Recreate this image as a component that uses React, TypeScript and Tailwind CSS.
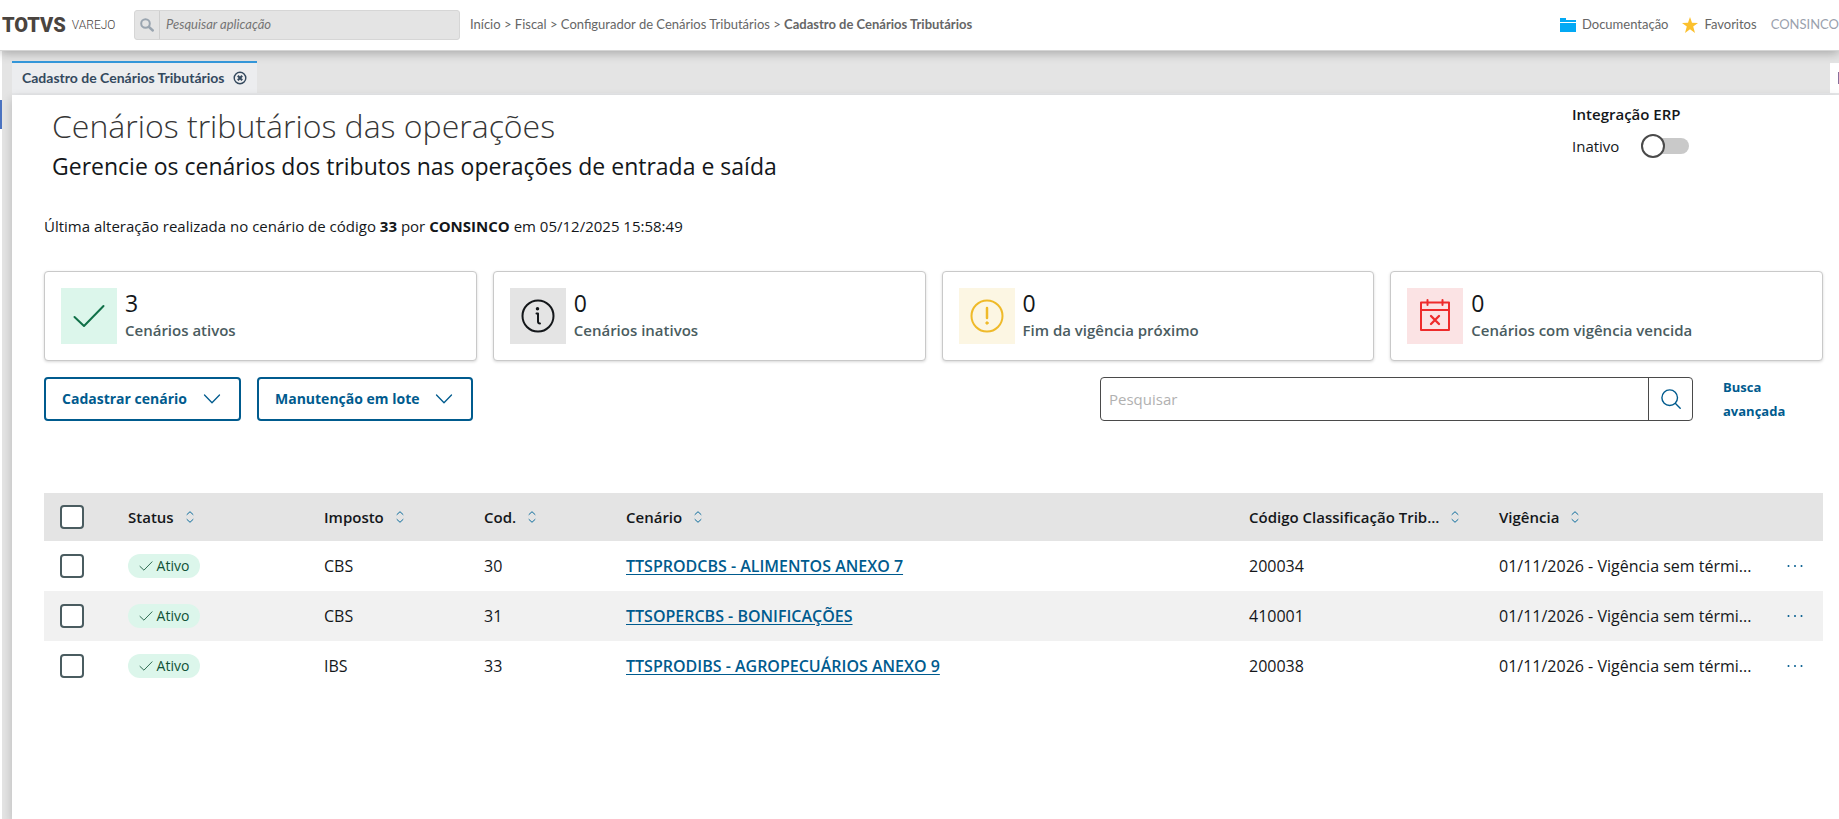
import { useState } from 'react';
import type { ReactNode } from 'react';

const columns = [
  { label: 'Status', width: 'w-[196px]' },
  { label: 'Imposto', width: 'w-[160px]' },
  { label: 'Cod.', width: 'w-[142px]' },
  { label: 'Cenário', width: '' },
  { label: 'Código Classificação Trib...', width: 'w-[250px]' },
  { label: 'Vigência', width: 'w-[280px]' },
];

const rows = [
  { tax: 'CBS', code: '30', name: 'TTSPRODCBS - ALIMENTOS ANEXO 7', classification: '200034' },
  { tax: 'CBS', code: '31', name: 'TTSOPERCBS - BONIFICAÇÕES', classification: '410001' },
  { tax: 'IBS', code: '33', name: 'TTSPRODIBS - AGROPECUÁRIOS ANEXO 9', classification: '200038' },
];

function CheckIcon({ className }: { className: string }) {
  return (
    <svg viewBox="0 0 32 24" className={className} fill="none" stroke="currentColor" strokeWidth="2" strokeLinecap="round" strokeLinejoin="round" aria-hidden="true">
      <path d="M1.500 13 11 22 30.500 2" />
    </svg>
  );
}

function InfoIcon() {
  return (
    <svg viewBox="0 0 34 34" className="size-[34px]" fill="none" stroke="currentColor" strokeWidth="2" strokeLinecap="round" strokeLinejoin="round" aria-hidden="true">
      <circle cx="17" cy="17" r="15.500" />
      <path d="M15.500 14.500h1.500v8q0 2 2 2" />
      <circle cx="16.500" cy="9.700" r="1" fill="currentColor" strokeWidth="1.500" />
    </svg>
  );
}

function WarningIcon() {
  return (
    <svg viewBox="0 0 34 34" className="size-[34px]" fill="none" stroke="currentColor" strokeWidth="2" strokeLinecap="round" aria-hidden="true">
      <circle cx="17" cy="17" r="15.500" />
      <path d="M17 9v10" strokeWidth="2.500" />
      <circle cx="17" cy="24" r="1.200" fill="currentColor" strokeWidth="1" />
    </svg>
  );
}

function CalendarIcon() {
  return (
    <svg viewBox="0 0 34 34" className="size-[34px]" fill="none" stroke="currentColor" strokeWidth="2" strokeLinecap="round" strokeLinejoin="round" aria-hidden="true">
      <path d="M3 3.500h28v27.500h-28zM3 11h28M9.500 1v5M24.500 1v5" />
      <path d="M13 17l8 8M21 17l-8 8" strokeWidth="2.300" />
    </svg>
  );
}

function ChevronDown() {
  return (
    <svg viewBox="0 0 18 10" className="h-[10px] w-[18px]" fill="none" stroke="currentColor" strokeWidth="1.300" strokeLinecap="round" strokeLinejoin="round" aria-hidden="true">
      <path d="M1.500 1 9 8.800 16.500 1" />
    </svg>
  );
}

function SortIcon() {
  return (
    <svg viewBox="0 0 8 12" className="h-3 w-2 shrink-0 text-[#0c6c9c]" fill="none" stroke="currentColor" strokeWidth="1" strokeLinecap="round" strokeLinejoin="round" aria-hidden="true">
      <path d="M1 3.500 4 .7 7 3.500M1 8.500 4 11.300 7 8.500" />
    </svg>
  );
}

function Header() {
  return (
    <header className="relative z-10 flex h-[51px] items-center border-b border-[#d5d5d5] bg-white font-['Lato',sans-serif] text-[13px] text-[#666] shadow-[0_2px_10px_rgba(0,0,0,0.28)]">
      <a href="#" className="flex w-[134px] shrink-0 items-center gap-[6px] pl-[2px] font-['Roboto',sans-serif] text-[#4a443f]">
        <span className="text-[20px] font-black">TOTVS</span>
        <span className="text-xs font-light">VAREJO</span>
      </a>
      <div className="flex h-[30px] w-[326px] shrink-0 rounded-[3px] border border-[#d6d6d6] bg-[#e4e4e4]">
        <span className="flex w-[25px] items-center justify-center border-r border-[#cfcfcf] text-[#9aa5b0]">
          <svg viewBox="0 0 14 14" className="size-[14px]" fill="none" stroke="currentColor" strokeWidth="2" strokeLinecap="round" aria-hidden="true">
            <circle cx="5.500" cy="5.500" r="4.300" />
            <path d="M9 9l3.800 3.500" strokeWidth="2.400" />
          </svg>
        </span>
        <input type="text" aria-label="Pesquisar aplicação" placeholder="Pesquisar aplicação" className="min-w-0 flex-1 px-[6px] italic outline-none placeholder:text-[#757575]" />
      </div>
      <nav aria-label="Localização" className="ml-[10px] whitespace-nowrap">
        <a href="#">Início</a> &gt; <a href="#">Fiscal</a> &gt; <a href="#">Configurador de Cenários Tributários</a> &gt; <b>Cadastro de Cenários Tributários</b>
      </nav>
      <nav className="ml-auto flex items-center gap-[14px]">
        <a href="#" className="flex items-center gap-[6px]">
          <svg viewBox="0 0 16 14" className="h-[14px] w-4" fill="#03a9f4" aria-hidden="true">
            <path d="M0 0h6v2h10v2H0zM0 5h16v9H0z" />
          </svg>
          Documentação
        </a>
        <a href="#" className="flex items-center gap-[6px]">
          <svg viewBox="0 0 16 16" className="size-4" fill="#fbc02d" aria-hidden="true">
            <path d="M8 0l2 5.800 6 .1-4.800 3.700L13 16l-5-3.700L3 16l1.800-6.400L0 5.900l6-.1z" />
          </svg>
          Favoritos
        </a>
        <a href="#" className="text-[#9aa1ad]">CONSINCO</a>
      </nav>
    </header>
  );
}

function TabBar() {
  return (
    <div className="flex h-11 items-end justify-between border-b-2 border-[#e7e8ea] bg-[#e4e4e4] font-['Lato',sans-serif]">
      <div className="flex h-8 items-center gap-2 border-t-2 border-[#3498db] bg-[#ecedef] px-[10px] text-[#34495e]">
        <a href="#" className="text-sm font-bold">Cadastro de Cenários Tributários</a>
        <button type="button" aria-label="Fechar aba">
          <svg viewBox="0 0 14 14" className="size-[14px]" fill="none" stroke="currentColor" aria-hidden="true">
            <circle cx="7" cy="7" r="5.800" strokeWidth="1.400" />
            <path d="M4.800 4.800l4.400 4.400M9.200 4.800 4.800 9.200" strokeWidth="2" />
          </svg>
        </button>
      </div>
      <div className="flex h-[30px] w-[9px] items-center justify-end bg-white">
        <span className="h-3 w-px bg-[#8a6f9c]" />
      </div>
    </div>
  );
}

function StatCard({ count, label, tone, children }: { count: number; label: string; tone: string; children: ReactNode }) {
  return (
    <div className="flex h-[90px] gap-2 rounded-[4px] border border-[#c9c9c9] bg-white p-4 shadow-[0_1px_3px_rgba(0,0,0,0.16)]">
      <div className={`flex size-14 shrink-0 items-center justify-center ${tone}`}>{children}</div>
      <div className="min-w-0">
        <p className="text-[23px] leading-[30px]">{count}</p>
        <p className="text-[15px] font-semibold leading-6 text-[#4a5c60]">{label}</p>
      </div>
    </div>
  );
}

function MenuButton({ children }: { children: ReactNode }) {
  return (
    <button type="button" className="flex h-11 items-center gap-4 rounded-[4px] border-2 border-[#005b8e] pl-4 pr-[18px] text-sm font-bold text-[#005b8e]">
      {children}
      <ChevronDown />
    </button>
  );
}

function RowCheckbox({ label }: { label: string }) {
  return (
    <input type="checkbox" aria-label={label} className="block size-6 appearance-none rounded-[4px] border-2 border-[#4a5c60] bg-white checked:bg-[#005b8e]" />
  );
}

function ScenarioTable() {
  return (
    <table className="mt-[72px] w-full table-fixed text-left">
      <thead>
        <tr className="h-12 bg-[#e4e4e4] text-[15px]">
          <th className="w-[68px] pl-4">
            <RowCheckbox label="Selecionar todos" />
          </th>
          {columns.map((column) => (
            <th key={column.label} className={`px-4 font-semibold ${column.width}`}>
              <button type="button" className="flex items-center gap-3 whitespace-nowrap">
                {column.label}
                <SortIcon />
              </button>
            </th>
          ))}
          <th className="w-[60px]" />
        </tr>
      </thead>
      <tbody>
        {rows.map((row) => (
          <tr key={row.code} className="h-[50px] text-base even:bg-[#f1f1f1]">
            <td className="pl-4">
              <RowCheckbox label={`Selecionar ${row.name}`} />
            </td>
            <td className="px-4">
              <span className="flex h-6 w-[72px] items-center justify-center gap-1 rounded-full bg-[#dcf6eb] text-sm text-[#0f5236]">
                <CheckIcon className="h-[10px] w-[14px]" />
                Ativo
              </span>
            </td>
            <td className="px-4">{row.tax}</td>
            <td className="px-4">{row.code}</td>
            <td className="px-4">
              <a href="#" className="font-semibold text-[#005b8e] underline underline-offset-2">{row.name}</a>
            </td>
            <td className="px-4">{row.classification}</td>
            <td className="whitespace-nowrap px-4">01/11/2026 - Vigência sem térmi...</td>
            <td className="text-[#005b8e]">
              <button type="button" aria-label="Ações" className="ml-6 block">
                <svg viewBox="0 0 16 4" className="h-1 w-4" fill="currentColor" aria-hidden="true">
                  <circle cx="1.500" cy="2" r="1" />
                  <circle cx="8" cy="2" r="1" />
                  <circle cx="14.500" cy="2" r="1" />
                </svg>
              </button>
            </td>
          </tr>
        ))}
      </tbody>
    </table>
  );
}

export default function App() {
  const [integrated, setIntegrated] = useState(false);

  return (
    <div className="flex min-h-screen flex-col bg-white font-['Open_Sans',sans-serif] text-[15px] text-[#14171a]">
      <Header />
      <div className="flex flex-1">
        {/* Collapsed side menu */}
        <aside className="w-[2px] shrink-0 pt-[49px]">
          <div className="h-[29px] bg-[#4a72c0]" />
        </aside>
        <div className="flex min-w-0 flex-1 flex-col bg-[#e4e4e4] pl-[10px]">
          <TabBar />
          <main className="flex-1 bg-white pl-8 pr-4 shadow-[0_4px_10px_rgba(0,0,0,0.2)]">
            <div className="flex justify-between pt-[7px]">
              <div className="pl-2">
                <h1 className="text-[32px] font-light leading-[48px] text-[#363636]">Cenários tributários das operações</h1>
                <h2 className="text-[23px] leading-8">Gerencie os cenários dos tributos nas operações de entrada e saída</h2>
              </div>
              <div className="w-[251px]">
                <p className="font-semibold leading-6">Integração ERP</p>
                <label className="mt-2 flex items-center gap-[22px] leading-6">
                  Inativo
                  <input
                    type="checkbox"
                    checked={integrated}
                    onChange={(e) => setIntegrated(e.target.checked)}
                    className="flex h-4 w-12 appearance-none items-center rounded-full bg-[#c9c9c9] before:size-6 before:shrink-0 before:rounded-full before:border-2 before:border-[#4a4a4a] before:bg-white checked:justify-end"
                  />
                </label>
              </div>
            </div>

            <p className="mt-8 leading-6">
              Última alteração realizada no cenário de código <b>33</b> por <b>CONSINCO</b> em 05/12/2025 15:58:49
            </p>

            <section className="mt-[33px] grid grid-cols-4 gap-4">
              <StatCard count={3} label="Cenários ativos" tone="bg-[#dcf6eb] text-[#107048]">
                <CheckIcon className="h-6 w-8" />
              </StatCard>
              <StatCard count={0} label="Cenários inativos" tone="bg-[#e4e4e4] text-[#14171a]">
                <InfoIcon />
              </StatCard>
              <StatCard count={0} label="Fim da vigência próximo" tone="bg-[#fcf6e3] text-[#efba2a]">
                <WarningIcon />
              </StatCard>
              <StatCard count={0} label="Cenários com vigência vencida" tone="bg-[#fbe3e4] text-[#ee2b2b]">
                <CalendarIcon />
              </StatCard>
            </section>

            <section className="mt-4 flex h-11 items-center">
              <div className="flex gap-4">
                <MenuButton>Cadastrar cenário</MenuButton>
                <MenuButton>Manutenção em lote</MenuButton>
              </div>
              <div className="ml-auto flex h-11 w-1/3 rounded-[4px] border border-[#4a4a4a]">
                <input type="text" aria-label="Pesquisar" placeholder="Pesquisar" className="min-w-0 flex-1 px-2 outline-none placeholder:text-[#b1b1b1]" />
                <button type="button" aria-label="Buscar" className="flex w-11 items-center justify-center border-l border-[#4a4a4a] text-[#005b8e]">
                  <svg viewBox="0 0 20 20" className="size-5" fill="none" stroke="currentColor" strokeWidth="1.400" strokeLinecap="round" aria-hidden="true">
                    <circle cx="8.700" cy="8.700" r="7.800" />
                    <path d="M14.500 14.500l4.700 4.700" />
                  </svg>
                </button>
              </div>
              <a href="#" className="ml-[30px] mr-5 w-20 text-[13px] font-bold leading-6 text-[#005b8e]">Busca avançada</a>
            </section>

            <ScenarioTable />
          </main>
        </div>
      </div>
    </div>
  );
}
